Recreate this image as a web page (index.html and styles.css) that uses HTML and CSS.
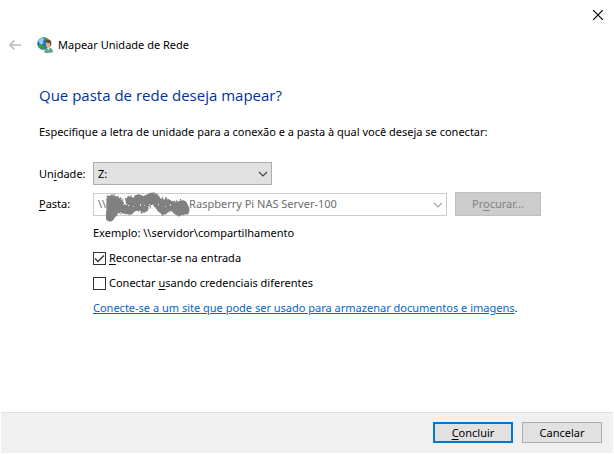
FILE: index.html
```
<!DOCTYPE html>
<html lang="pt-BR">
<head>
    <meta charset="UTF-8">
    <meta name="viewport" content="width=device-width, initial-scale=1.0">
    <title>Mapear Unidade de Rede</title>
    <link rel="stylesheet" href="styles.css">
</head>
<body>
<form class="dialog">
    <div class="titlebar">
        <button type="button" class="btn_close" aria-label="Fechar">
            <svg width="10" height="10" viewBox="0 0 10 10"><path d="M0 0L10 10M10 0L0 10" stroke="#000" stroke-width="1.2"/></svg>
        </button>
    </div>

    <header class="header">
        <button type="button" class="btn_back" aria-label="Voltar" disabled>
            <svg width="12" height="10" viewBox="0 0 12 10" fill="none" stroke="#bcbcbc" stroke-width="1.6"><path d="M12 5H1M5.500 .5L1 5L5.500 9.500"/></svg>
        </button>
        <svg class="icon_net" width="16" height="16" viewBox="0 0 16 16">
            <circle cx="6.500" cy="6.500" r="6.300" fill="#2a6fc4"/>
            <path d="M1 3.500Q3 .8 6 .4L7.500 2L6 4L6.500 6L4 8L2.500 6Z" fill="#8fd0f0"/>
            <path d="M6 .3Q10 0 12 3L9.500 4L7 2.500Z" fill="#3fa046"/>
            <path d="M3 7L6.500 8L7.500 10.500L6 12.800Q2.500 12 1 9Z" fill="#35a23e"/>
            <path d="M7.500 15.800Q7 11 11 10.500Q16 10.500 16 15.200Q12 16.300 7.500 15.800Z" fill="#62a78c"/>
            <path d="M10 10.500L11.300 13.500L12.800 10.500Z" fill="#e8efe9"/>
            <ellipse cx="11.300" cy="7.200" rx="2.500" ry="3.500" fill="#e3b08c"/>
            <path d="M8.500 7Q7.800 3 11 2.600Q15 2.600 14.300 8L13.300 9.500L13 6Q10.500 6.500 9.500 5Z" fill="#6b4a32"/>
        </svg>
        <span class="header_text">Mapear Unidade de Rede</span>
    </header>

    <main class="main">
        <h1 class="heading">Que pasta de rede deseja mapear?</h1>
        <p class="intro">Especifique a letra de unidade para a conexão e a pasta à qual você deseja se conectar:</p>

        <div class="fields">
            <label for="drive">Un<u>i</u>dade:</label>
            <div class="combo combo_drive">
                <select id="drive" class="field">
                    <option>Z:</option>
                </select>
                <svg class="arrow" width="10" height="6" viewBox="0 0 10 6"><path d="M1 1L5 5L9 1"/></svg>
            </div>

            <label for="folder"><u>P</u>asta:</label>
            <div class="folder_row">
                <div class="combo combo_folder">
                    <input id="folder" class="field" type="text" value="\\&nbsp;&nbsp;&nbsp;&nbsp;&nbsp;&nbsp;&nbsp;&nbsp;&nbsp;&nbsp;&nbsp;&nbsp;&nbsp;&nbsp;&nbsp;&nbsp;&nbsp;&nbsp;&nbsp;&nbsp;&nbsp;&nbsp;&nbsp;&nbsp;&nbsp;&nbsp;&nbsp;&nbsp;&nbsp;Raspberry Pi NAS Server-100" disabled>
                    <svg class="arrow" width="10" height="6" viewBox="0 0 10 6"><path d="M1 1L5 5L9 1"/></svg>
                    <svg class="scribble" width="84" height="30" viewBox="0 0 84 30">
                        <path class="blob" d="M5 8L5 17L4 25M5 8L10 9L14 13L9 18L6 22M14 15L18 17L24 18L27 11L32 12L38 16M24 9L27 11L24 18M32 7L38 9L46 5L50 8L55 16L58 18L62 12L68 15L72 19L79 18L77 13L72 14M28 15L36 12L46 8M55 11L62 15"/>
                        <path class="edge" d="M2 5L9 3L17 9L24 5L33 4L41 5L47 1L53 5L60 7L66 11L76 8L81 15L81 21L73 23L65 18L57 22L50 13L42 16L36 20L30 16L24 22L16 20L8 24L4 28L1 25L3 18L1 9Z"/>
                        <path d="M17 12h1v1h-1zM34 12h1v2h-1zM59 14h1v1h-1z" fill="#f8dfa8"/>
                        <path d="M22 13h1v1h-1zM43 12h1v1h-1zM52 12h1v1h-1z" fill="#fff"/>
                        <path d="M38 13h1v1h-1zM64 12h1v2h-1zM27 14h1v1h-1z" fill="#b8dcf4"/>
                    </svg>
                </div>
                <button type="button" class="btn btn_browse" disabled>Pr<u>o</u>curar...</button>
            </div>
        </div>

        <div class="options">
            <p class="example">Exemplo: \\servidor\compartilhamento</p>
            <label class="check"><input type="checkbox" checked><span><u>R</u>econectar-se na entrada</span></label>
            <label class="check"><input type="checkbox"><span>Conectar <u>u</u>sando credenciais diferentes</span></label>
            <p class="site"><a href="#">Conecte-se a um site que pode ser usado para armazenar documentos e imagens</a>.</p>
        </div>
    </main>

    <footer class="footer">
        <button type="submit" class="btn btn_default"><u>C</u>oncluir</button>
        <button type="button" class="btn">Cancelar</button>
    </footer>
</form>
</body>
</html>
```
FILE: styles.css
```
* { box-sizing: border-box; }
body {
    margin: 0;
    background: #fff;
    color: #000;
    font: 11px/16px "Noto Sans", "Open Sans", sans-serif;
}
p, h1 { margin: 0; }
button, input, select {
    margin: 0;
    font: inherit;
    color: inherit;
}
u { text-underline-offset: 2px; }

.dialog {
    min-height: 100vh;
    display: flex;
    flex-direction: column;
    padding: 0 1px 1px;
}

/* title */
.titlebar {
    height: 30px;
    display: flex;
    justify-content: flex-end;
}
.btn_close, .btn_back {
    display: flex;
    align-items: center;
    justify-content: center;
    padding: 0;
    border: 0;
    background: none;
}
.btn_close {
    width: 30px;
    height: 30px;
}
.header {
    height: 30px;
    display: flex;
    align-items: center;
    padding-left: 8px;
}
.icon_net { margin: 0 5px 0 16px; }

/* content */
.main {
    flex: 1;
    padding: 23px 38px 16px;
}
.heading {
    font-family: "Open Sans", "Noto Sans", sans-serif;
    font-size: 15px;
    line-height: 24px;
    font-weight: 400;
    color: #003399;
}
.intro {
    margin-top: 17px;
    white-space: nowrap;
}
.fields {
    display: grid;
    grid-template-columns: 54px 1fr;
    row-gap: 7px;
    align-items: center;
    margin-top: 22px;
}
.folder_row {
    display: flex;
    align-items: center;
    gap: 8px;
}
.combo { position: relative; }
.combo_drive { width: 179px; }
.combo_folder { width: 354px; }
.field {
    display: block;
    width: 100%;
    height: 23px;
    padding: 0 24px 0 4px;
    border: 1px solid #adadad;
    border-radius: 0;
    background: #e1e1e1;
    appearance: none;
}
.field:disabled {
    border-color: #ccc;
    background: #fff;
    color: #6d6d6d;
    opacity: 1;
}
input.field { padding-bottom: 2px; }
.arrow {
    position: absolute;
    right: 4px;
    top: 9px;
    fill: none;
    stroke: #444;
    stroke-width: 1.2;
    pointer-events: none;
}
.combo_folder .arrow { stroke: #aaa; }
/* covers the server address */
.scribble {
    position: absolute;
    left: 13px;
    top: -1px;
}
.scribble .blob {
    fill: none;
    stroke: #808080;
    stroke-width: 9;
    stroke-linecap: round;
    stroke-linejoin: round;
}
.scribble .edge {
    fill: none;
    stroke: #808080;
    stroke-width: 3;
    stroke-dasharray: 1 2 2 1 1 3;
}

.options {
    display: flex;
    flex-direction: column;
    align-items: flex-start;
    padding: 9px 0 0 54px;
}
.check {
    display: flex;
    align-items: center;
    gap: 3px;
    margin-top: 9px;
}
.check input {
    width: 13px;
    height: 13px;
    border: 1px solid #333;
    background: #fff;
    appearance: none;
}
.check input:checked {
    background: #fff url("data:image/svg+xml,%3Csvg xmlns='http://www.w3.org/2000/svg' viewBox='0 0 11 11'%3E%3Cpath d='M1 5.500L4 8.500L10 2.500' fill='none' stroke='%23333' stroke-width='1.3'/%3E%3C/svg%3E") center / 11px 11px no-repeat;
}
.site {
    margin-top: 9px;
    white-space: nowrap;
}
.site a { color: #0066cc; }

/* buttons */
.btn {
    width: 80px;
    height: 21px;
    padding: 0;
    border: 1px solid #adadad;
    background: #e1e1e1;
}
.btn_default { border: 2px solid #0078d7; }
.btn_browse {
    width: 86px;
    height: 24px;
}
.btn:disabled {
    border-color: #bfbfbf;
    background: #ccc;
    color: #838383;
}
.footer {
    display: flex;
    justify-content: flex-end;
    gap: 9px;
    padding: 9px 11px 10px;
    border-top: 1px solid #dfdfdf;
    background: #f0f0f0;
}
```
